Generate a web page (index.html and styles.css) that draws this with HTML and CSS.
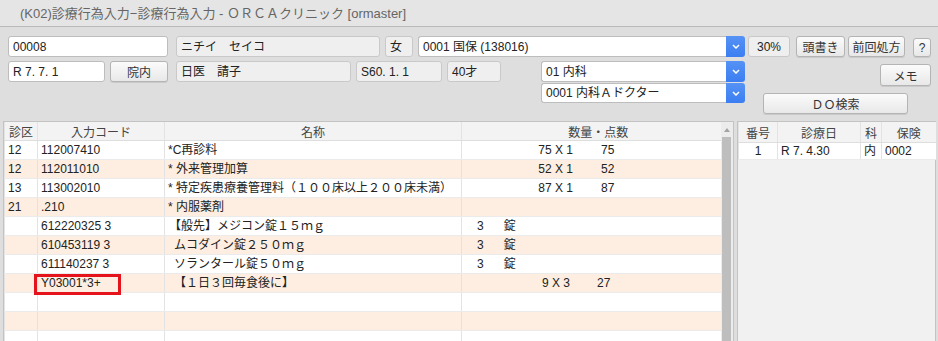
FILE: index.html
```html
<!DOCTYPE html>
<html lang="ja">
<head>
    <meta charset="UTF-8">
    <title>(K02)診療行為入力</title>
    <link rel="stylesheet" href="styles.css">
</head>
<body>
    <div class="titlebar">(K02)診療行為入力−診療行為入力 - ＯＲＣＡクリニック [ormaster]</div>

    <div class="form">
        <div class="row">
            <div class="field w-id">00008</div>
            <div class="field ro w-kana">ニチイ　セイコ</div>
            <div class="field ro w-sex">女</div>
            <div class="select w-ins">
                <div class="field">0001 国保 (138016)</div>
                <div class="arrow"><svg width="8" height="5" viewBox="0 0 8 5"><path d="M1 1l3 3 3-3" fill="none" stroke="#fff" stroke-width="1.5"/></svg></div>
            </div>
            <div class="field ro w-rate">30%</div>
            <button class="btn w-head">頭書き</button>
            <button class="btn w-prev">前回処方</button>
            <button class="btn w-help">?</button>
        </div>

        <div class="row2">
            <div class="field w-date">R 7. 7. 1</div>
            <button class="btn w-in">院内</button>
            <div class="field ro w-name">日医　請子</div>
            <div class="field ro w-birth">S60. 1. 1</div>
            <div class="field ro w-age">40才</div>
            <div class="selects">
                <div class="select">
                    <div class="field">01 内科</div>
                    <div class="arrow"><svg width="8" height="5" viewBox="0 0 8 5"><path d="M1 1l3 3 3-3" fill="none" stroke="#fff" stroke-width="1.5"/></svg></div>
                </div>
                <div class="select low">
                    <div class="field">0001 内科Ａドクター</div>
                    <div class="arrow"><svg width="8" height="5" viewBox="0 0 8 5"><path d="M1 1l3 3 3-3" fill="none" stroke="#fff" stroke-width="1.5"/></svg></div>
                </div>
            </div>
            <div class="side">
                <button class="btn w-memo">メモ</button>
                <button class="btn w-do">ＤＯ検索</button>
            </div>
        </div>
    </div>

    <div class="panels">
        <div class="list">
            <table class="orders">
                <colgroup>
                    <col style="width: 33px">
                    <col style="width: 127px">
                    <col style="width: 297px">
                    <col style="width: 259px">
                </colgroup>
                <thead>
                    <tr><th>診区</th><th>入力コード</th><th>名称</th><th class="qty-head">数量・点数</th></tr>
                </thead>
                <tbody>
                    <tr><td>12</td><td>112007410</td><td>*C再診料</td><td><span class="amt">75 X 1</span><span class="pts">75</span></td></tr>
                    <tr><td>12</td><td>112011010</td><td>* 外来管理加算</td><td><span class="amt">52 X 1</span><span class="pts">52</span></td></tr>
                    <tr><td>13</td><td>113002010</td><td>* 特定疾患療養管理料（１００床以上２００床未満）</td><td><span class="amt">87 X 1</span><span class="pts">87</span></td></tr>
                    <tr><td>21</td><td>.210</td><td>* 内服薬剤</td><td></td></tr>
                    <tr><td></td><td>612220325 3</td><td class="ind">【般先】メジコン錠１５ｍｇ</td><td><span class="dose">3</span><span class="unit">錠</span></td></tr>
                    <tr><td></td><td>610453119 3</td><td class="ind2">ムコダイン錠２５０ｍｇ</td><td><span class="dose">3</span><span class="unit">錠</span></td></tr>
                    <tr><td></td><td>611140237 3</td><td class="ind2">ソランタール錠５０ｍｇ</td><td><span class="dose">3</span><span class="unit">錠</span></td></tr>
                    <tr><td></td><td class="marked">Y03001*3+<span class="mark"></span></td><td class="ind3">【１日３回毎食後に】</td><td><span class="amt short">9 X 3</span><span class="pts">27</span></td></tr>
                    <tr><td></td><td></td><td></td><td></td></tr>
                    <tr><td></td><td></td><td></td><td></td></tr>
                    <tr><td></td><td></td><td></td><td></td></tr>
                    <tr><td></td><td></td><td></td><td></td></tr>
                </tbody>
            </table>
            <div class="scrollbar">
                <div class="up"></div>
                <div class="thumb"></div>
            </div>
        </div>

        <div class="history">
            <table class="visits">
                <colgroup>
                    <col style="width: 39px">
                    <col style="width: 83px">
                    <col style="width: 21px">
                    <col style="width: 54px">
                </colgroup>
                <thead>
                    <tr><th>番号</th><th>診療日</th><th>科</th><th>保険</th></tr>
                </thead>
                <tbody>
                    <tr><td class="num">1</td><td>R 7. 4.30</td><td>内</td><td>0002</td></tr>
                </tbody>
            </table>
        </div>
    </div>
</body>
</html>
```

FILE: styles.css
```css
body {
    margin: 0;
    width: 938px;
    height: 341px;
    overflow: hidden;
    background-color: #dedede;
    font-family: "Liberation Sans", "Noto Sans CJK JP", sans-serif;
    font-size: 12px;
    color: #222;
}
.titlebar {
    height: 26px;
    line-height: 27px;
    padding-left: 20px;
    background-color: #e5e5e5;
    border-bottom: 1px solid #bababa;
    font-size: 13px;
    color: #666;
}

/* header form */
.form {
    padding: 9px 7px 0 8px;
}
.row {
    display: flex;
    height: 21px;
}
.row2 {
    display: flex;
    margin-top: 4px;
}
.field {
    box-sizing: border-box;
    height: 21px;
    line-height: 20px;
    padding: 0 4px;
    background-color: #fff;
    border: 1px solid #bdbdbd;
    border-radius: 3px;
    white-space: nowrap;
    overflow: hidden;
}
.field.ro {
    background-color: #efefef;
    border-color: #c9c9c9;
}
.btn {
    box-sizing: border-box;
    height: 21px;
    padding: 0;
    background: linear-gradient(#fbfbfb, #e8e8e8);
    border: 1px solid #b4b4b4;
    border-radius: 3px;
    box-shadow: 0 1px 0 #cacaca;
    font-family: inherit;
    font-size: 12px;
    color: #333;
    text-align: center;
}
.select {
    display: flex;
    height: 21px;
}
.select .field {
    flex: 1;
    border-right: none;
    border-radius: 3px 0 0 3px;
}
.arrow {
    width: 19px;
    display: flex;
    align-items: center;
    justify-content: center;
    background: linear-gradient(#5592f5, #3b7ef2);
    border-radius: 0 3px 3px 0;
}
.select.low {
    margin-top: 1px;
    height: 20px;
}
.select.low .field {
    height: 20px;
    line-height: 19px;
}

.w-id { width: 160px; }
.w-kana { width: 204px; margin-left: 8px; }
.w-sex { width: 28px; margin-left: 5px; }
.w-ins { width: 327px; margin-left: 5px; }
.w-rate { width: 42px; margin-left: 3px; text-align: center; }
.w-head { width: 49px; margin-left: 6px; }
.w-prev { width: 57px; margin-left: 3px; }
.w-help { width: 18px; height: 19px; margin-left: 8px; margin-top: 2px; }

.w-date { width: 97px; }
.w-in { width: 58px; margin-left: 5px; }
.w-name { width: 175px; margin-left: 8px; }
.w-birth { width: 86px; margin-left: 5px; }
.w-age { width: 54px; margin-left: 5px; }
.selects {
    width: 204px;
    margin-left: 40px;
}
.side {
    flex: 1;
    display: flex;
    flex-direction: column;
    padding-left: 18px;
}
.w-memo {
    width: 51px;
    height: 22px;
    margin-top: 3px;
    align-self: flex-end;
}
.w-do {
    width: 145px;
    margin-top: 7px;
}

/* lower panels */
.panels {
    display: flex;
    margin-top: 7px;
    padding-left: 3px;
    height: 240px;
}
.list {
    display: flex;
    width: 729px;
    background-color: #fff;
    border: 1px solid #c3c3c3;
}
table {
    border-collapse: collapse;
    table-layout: fixed;
}
th {
    font-weight: normal;
    color: #444;
    background-color: #f3f3f3;
    text-align: center;
    padding: 0;
}
.orders {
    width: 716px;
    align-self: flex-start;
}
.orders th {
    height: 18px;
    border-bottom: 1px solid #dedede;
    border-left: 1px solid #e3e3e3;
}
.orders th.qty-head {
    padding-left: 14px;
}
.orders td {
    height: 18px;
    line-height: 18px;
    padding: 0 3px;
    white-space: nowrap;
    border-bottom: 1px solid #ebebeb;
    border-left: 1px solid #e3e3e3;
}
.orders tbody tr:nth-child(even) {
    background-color: #fdeee1;
}
.orders .ind { padding-left: 4px; }
.orders .ind2 { padding-left: 9px; }
.orders .ind3 { padding-left: 9px; }
.amt {
    display: inline-block;
    width: 108px;
    text-align: right;
}
.amt.short { width: 105px; }
.pts { margin-left: 28px; }
.short + .pts { margin-left: 27px; }
.dose { margin-left: 12px; }
.unit { margin-left: 20px; }
.marked {
    position: relative;
}
.mark {
    position: absolute;
    left: -4px;
    top: 0;
    width: 87px;
    height: 21px;
    box-sizing: border-box;
    border: 3px solid #e5141c;
}

.scrollbar {
    width: 13px;
    display: flex;
    flex-direction: column;
    background-color: #ececec;
}
.up {
    height: 15px;
    position: relative;
}
.up::after {
    content: "";
    position: absolute;
    left: 3px;
    top: 6px;
    border-left: 3.5px solid transparent;
    border-right: 3.5px solid transparent;
    border-bottom: 4px solid #a3a3a3;
}
.thumb {
    flex: 1;
    margin: 0 2px 0 1px;
    background-color: #bebebe;
}

.history {
    width: 197px;
    margin-left: 3px;
    background-color: #f1f1f1;
    border: 1px solid #c3c3c3;
}
.visits {
    width: 197px;
}
.visits th {
    height: 20px;
    border-bottom: 1px solid #dedede;
    border-left: 1px solid #e3e3e3;
}
.visits td {
    height: 16px;
    line-height: 16px;
    padding: 0 3px;
    background-color: #fff;
    white-space: nowrap;
    border-left: 1px solid #e3e3e3;
    border-bottom: 1px solid #ebebeb;
}
.visits .num {
    text-align: center;
}
```
